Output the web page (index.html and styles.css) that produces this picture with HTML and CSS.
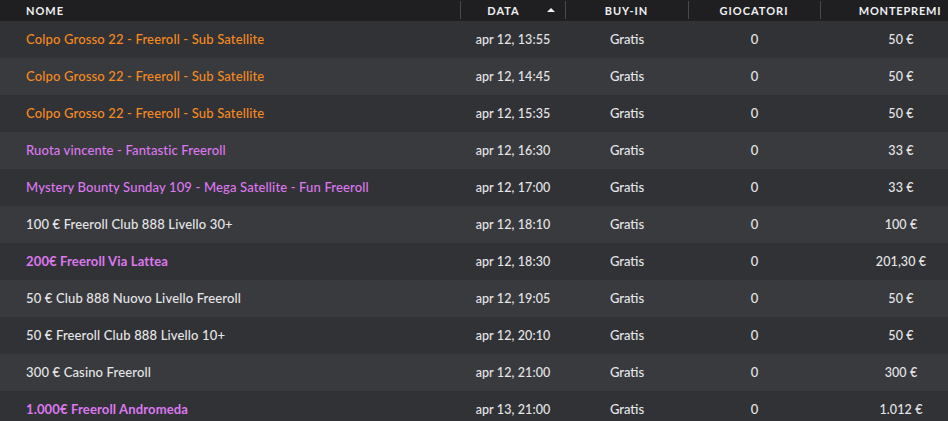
FILE: index.html
```html
<!DOCTYPE html>
<html lang="it">
<head>
<meta charset="utf-8">
<link rel="stylesheet" href="styles.css">
</head>
<body>
<table class="grid">
  <thead>
    <tr>
      <th class="c-name"><span class="hd">NOME</span></th>
      <th class="c-date"><span class="hd">DATA</span><span class="sort"></span></th>
      <th class="c-buy"><span class="hd">BUY-IN</span></th>
      <th class="c-players"><span class="hd">GIOCATORI</span></th>
      <th class="c-prize"><span class="hd">MONTEPREMI</span></th>
    </tr>
  </thead>
  <tbody>
    <tr><td class="c-name orange">Colpo Grosso 22 - Freeroll - Sub Satellite</td><td class="c-date">apr 12, 13:55</td><td class="c-buy">Gratis</td><td class="c-players">0</td><td class="c-prize">50 €</td></tr>
    <tr><td class="c-name orange">Colpo Grosso 22 - Freeroll - Sub Satellite</td><td class="c-date">apr 12, 14:45</td><td class="c-buy">Gratis</td><td class="c-players">0</td><td class="c-prize">50 €</td></tr>
    <tr><td class="c-name orange">Colpo Grosso 22 - Freeroll - Sub Satellite</td><td class="c-date">apr 12, 15:35</td><td class="c-buy">Gratis</td><td class="c-players">0</td><td class="c-prize">50 €</td></tr>
    <tr><td class="c-name pink">Ruota vincente - Fantastic Freeroll</td><td class="c-date">apr 12, 16:30</td><td class="c-buy">Gratis</td><td class="c-players">0</td><td class="c-prize">33 €</td></tr>
    <tr><td class="c-name pink">Mystery Bounty Sunday 109 - Mega Satellite - Fun Freeroll</td><td class="c-date">apr 12, 17:00</td><td class="c-buy">Gratis</td><td class="c-players">0</td><td class="c-prize">33 €</td></tr>
    <tr><td class="c-name">100 € Freeroll Club 888 Livello 30+</td><td class="c-date">apr 12, 18:10</td><td class="c-buy">Gratis</td><td class="c-players">0</td><td class="c-prize">100 €</td></tr>
    <tr><td class="c-name pink strong">200€ Freeroll Via Lattea</td><td class="c-date">apr 12, 18:30</td><td class="c-buy">Gratis</td><td class="c-players">0</td><td class="c-prize">201,30 €</td></tr>
    <tr><td class="c-name">50 € Club 888 Nuovo Livello Freeroll</td><td class="c-date">apr 12, 19:05</td><td class="c-buy">Gratis</td><td class="c-players">0</td><td class="c-prize">50 €</td></tr>
    <tr><td class="c-name">50 € Freeroll Club 888 Livello 10+</td><td class="c-date">apr 12, 20:10</td><td class="c-buy">Gratis</td><td class="c-players">0</td><td class="c-prize">50 €</td></tr>
    <tr><td class="c-name">300 € Casino Freeroll</td><td class="c-date">apr 12, 21:00</td><td class="c-buy">Gratis</td><td class="c-players">0</td><td class="c-prize">300 €</td></tr>
    <tr><td class="c-name pink strong">1.000€ Freeroll Andromeda</td><td class="c-date">apr 13, 21:00</td><td class="c-buy">Gratis</td><td class="c-players">0</td><td class="c-prize">1.012 €</td></tr>
  </tbody>
</table>
</body>
</html>
```
FILE: styles.css
```css
html, body {
  margin: 0;
  padding: 0;
  background: #303135;
  overflow: hidden;
}
body {
  font-family: Lato, "Open Sans", sans-serif;
  font-size: 13px;
  color: #e6e6e8;
}
.grid {
  width: 948px;
  border-collapse: collapse;
  table-layout: fixed;
}
.grid thead tr {
  background: #1f1f21;
  height: 21px;
}
.grid th {
  font-weight: 700;
  font-size: 11px;
  letter-spacing: 1px;
  color: #f0f0f2;
  padding: 0;
  position: relative;
  text-align: center;
}
.grid th + th::before {
  content: "";
  position: absolute;
  left: 0;
  top: 1px;
  bottom: 2px;
  width: 1px;
  background: #4a4a4e;
}
.grid .c-name {
  width: 460px;
  text-align: left;
  padding-left: 26px;
  box-sizing: border-box;
}
.grid .c-date { width: 105px; }
.grid th.c-date { padding-right: 18px; box-sizing: border-box; }
.grid .c-buy { width: 123px; }
.grid .c-players { width: 132px; }
.grid .c-prize {
  width: 128px;
  padding-left: 34px;
  box-sizing: border-box;
}
.grid th.c-prize { letter-spacing: 0.8px; padding-left: 32px; }
.sort {
  position: absolute;
  right: 10px;
  top: 8px;
  width: 0;
  height: 0;
  border-left: 4px solid transparent;
  border-right: 4px solid transparent;
  border-bottom: 4px solid #f0f0f2;
}
.grid tbody tr {
  height: 37px;
}
.grid tbody tr:nth-child(odd) { background: #313236; }
.grid tbody tr:nth-child(even) { background: #393a3e; }
.grid td {
  text-align: center;
  font-weight: 500;
  white-space: nowrap;
  padding-top: 0;
  padding-bottom: 1px;
  padding-right: 0;
}
.grid td.c-name { letter-spacing: 0.15px; }
.grid td.c-date, .grid td.c-prize { font-size: 12.5px; letter-spacing: 0.1px; }
.orange { color: #f58a1f; }
.pink { color: #dd78f0; }
.grid td.strong { font-weight: 700; }
```
